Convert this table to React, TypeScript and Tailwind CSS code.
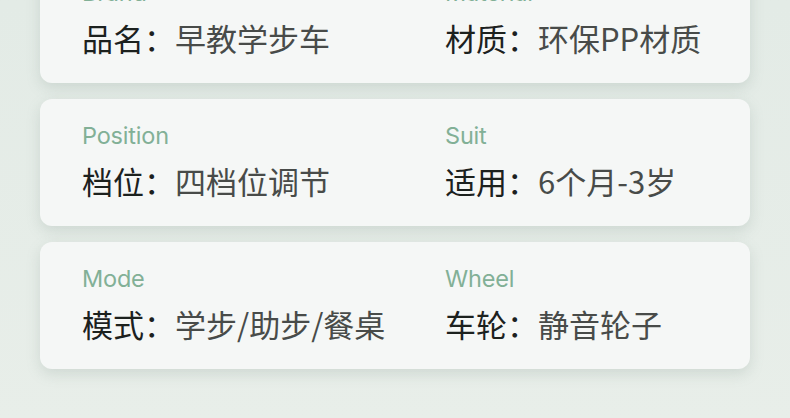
import React from "react";

const rows = [
  [
    { label: "Brand", key: "品名", value: "早教学步车" },
    { label: "Material", key: "材质", value: "环保PP材质" },
  ],
  [
    { label: "Position", key: "档位", value: "四档位调节" },
    { label: "Suit", key: "适用", value: "6个月-3岁" },
  ],
  [
    { label: "Mode", key: "模式", value: "学步/助步/餐桌" },
    { label: "Wheel", key: "车轮", value: "静音轮子" },
  ],
];

export default function App() {
  return (
    <div className="h-[418px] w-[790px] overflow-hidden bg-gradient-to-b from-[#e3ebe6] to-[#e8eee9] font-['Inter','Noto_Sans_CJK_SC',sans-serif]">
      <div className="-mt-[44px] flex flex-col gap-4 px-10">
        {rows.map((row, i) => (
          <div
            key={i}
            className="grid h-[127px] grid-cols-[363px_1fr] rounded-xl bg-[#f5f7f6] pl-[42px] pt-[23px] shadow-[0_5px_14px_rgba(120,140,130,0.22)]"
          >
            {row.map((item) => (
              <div key={item.label}>
                <div className="text-[23.5px] leading-[28px] tracking-[-0.2px] text-[#82b096]">
                  {item.label}
                </div>
                <div className="mt-[11px] text-[31px] leading-[40px] font-['Noto_Sans_CJK_SC',sans-serif]">
                  <span className="text-[#1c211e]">{item.key}：</span>
                  <span className="text-[#484b49]">{item.value}</span>
                </div>
              </div>
            ))}
          </div>
        ))}
      </div>
    </div>
  );
}
